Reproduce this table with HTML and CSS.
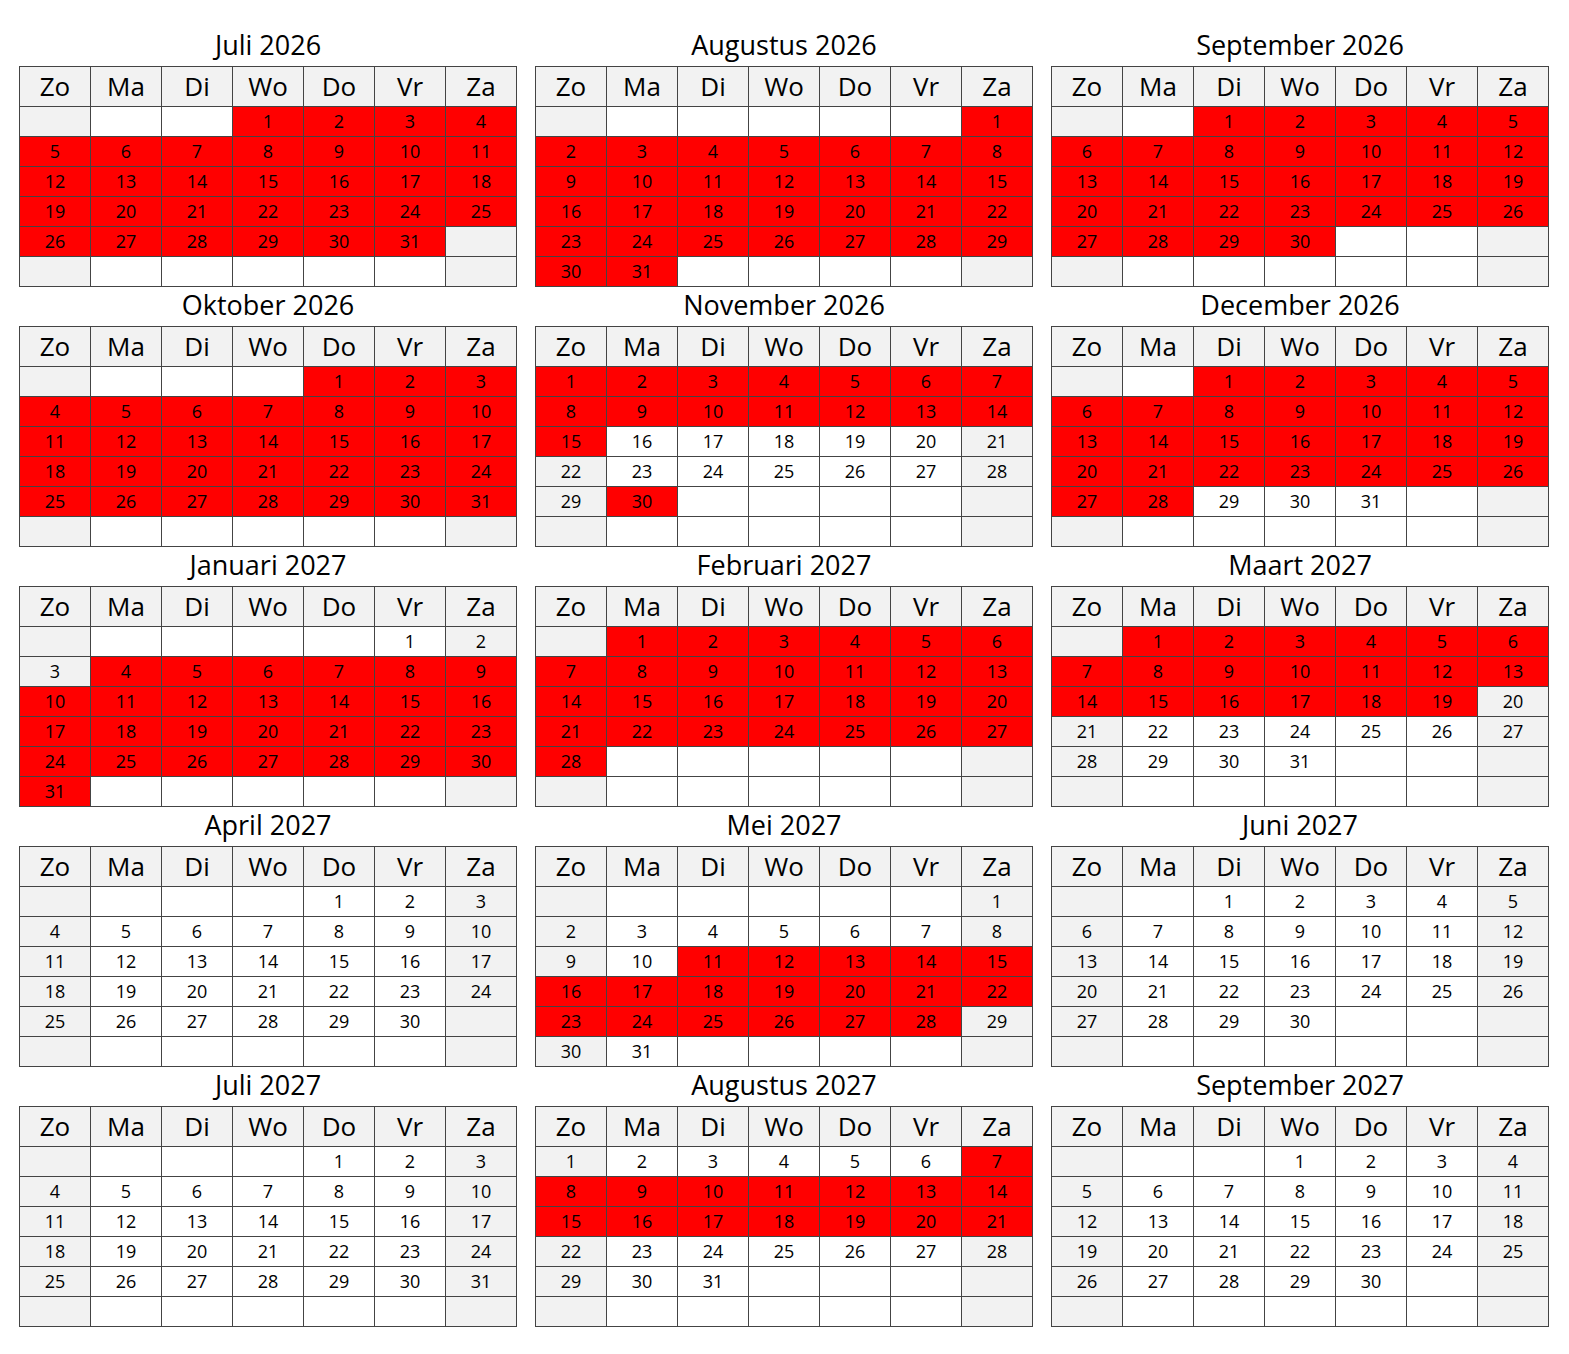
FILE: index.html
```html
<!DOCTYPE html>
<html lang="nl">
<head>
<meta charset="utf-8">
<title>Kalender</title>
<link rel="stylesheet" href="styles.css">
</head>
<body>
<div class="grid">

<section class="month">
<h2 class="title">Juli 2026</h2>
<table class="cal">
<thead><tr><th>Zo</th><th>Ma</th><th>Di</th><th>Wo</th><th>Do</th><th>Vr</th><th>Za</th></tr></thead>
<tbody>
<tr><td></td><td></td><td></td><td class="r">1</td><td class="r">2</td><td class="r">3</td><td class="r">4</td></tr>
<tr class="r"><td>5</td><td>6</td><td>7</td><td>8</td><td>9</td><td>10</td><td>11</td></tr>
<tr class="r"><td>12</td><td>13</td><td>14</td><td>15</td><td>16</td><td>17</td><td>18</td></tr>
<tr class="r"><td>19</td><td>20</td><td>21</td><td>22</td><td>23</td><td>24</td><td>25</td></tr>
<tr><td class="r">26</td><td class="r">27</td><td class="r">28</td><td class="r">29</td><td class="r">30</td><td class="r">31</td><td></td></tr>
<tr><td></td><td></td><td></td><td></td><td></td><td></td><td></td></tr>
</tbody>
</table>
</section>

<section class="month">
<h2 class="title">Augustus 2026</h2>
<table class="cal">
<thead><tr><th>Zo</th><th>Ma</th><th>Di</th><th>Wo</th><th>Do</th><th>Vr</th><th>Za</th></tr></thead>
<tbody>
<tr><td></td><td></td><td></td><td></td><td></td><td></td><td class="r">1</td></tr>
<tr class="r"><td>2</td><td>3</td><td>4</td><td>5</td><td>6</td><td>7</td><td>8</td></tr>
<tr class="r"><td>9</td><td>10</td><td>11</td><td>12</td><td>13</td><td>14</td><td>15</td></tr>
<tr class="r"><td>16</td><td>17</td><td>18</td><td>19</td><td>20</td><td>21</td><td>22</td></tr>
<tr class="r"><td>23</td><td>24</td><td>25</td><td>26</td><td>27</td><td>28</td><td>29</td></tr>
<tr><td class="r">30</td><td class="r">31</td><td></td><td></td><td></td><td></td><td></td></tr>
</tbody>
</table>
</section>

<section class="month">
<h2 class="title">September 2026</h2>
<table class="cal">
<thead><tr><th>Zo</th><th>Ma</th><th>Di</th><th>Wo</th><th>Do</th><th>Vr</th><th>Za</th></tr></thead>
<tbody>
<tr><td></td><td></td><td class="r">1</td><td class="r">2</td><td class="r">3</td><td class="r">4</td><td class="r">5</td></tr>
<tr class="r"><td>6</td><td>7</td><td>8</td><td>9</td><td>10</td><td>11</td><td>12</td></tr>
<tr class="r"><td>13</td><td>14</td><td>15</td><td>16</td><td>17</td><td>18</td><td>19</td></tr>
<tr class="r"><td>20</td><td>21</td><td>22</td><td>23</td><td>24</td><td>25</td><td>26</td></tr>
<tr><td class="r">27</td><td class="r">28</td><td class="r">29</td><td class="r">30</td><td></td><td></td><td></td></tr>
<tr><td></td><td></td><td></td><td></td><td></td><td></td><td></td></tr>
</tbody>
</table>
</section>

<section class="month">
<h2 class="title">Oktober 2026</h2>
<table class="cal">
<thead><tr><th>Zo</th><th>Ma</th><th>Di</th><th>Wo</th><th>Do</th><th>Vr</th><th>Za</th></tr></thead>
<tbody>
<tr><td></td><td></td><td></td><td></td><td class="r">1</td><td class="r">2</td><td class="r">3</td></tr>
<tr class="r"><td>4</td><td>5</td><td>6</td><td>7</td><td>8</td><td>9</td><td>10</td></tr>
<tr class="r"><td>11</td><td>12</td><td>13</td><td>14</td><td>15</td><td>16</td><td>17</td></tr>
<tr class="r"><td>18</td><td>19</td><td>20</td><td>21</td><td>22</td><td>23</td><td>24</td></tr>
<tr class="r"><td>25</td><td>26</td><td>27</td><td>28</td><td>29</td><td>30</td><td>31</td></tr>
<tr><td></td><td></td><td></td><td></td><td></td><td></td><td></td></tr>
</tbody>
</table>
</section>

<section class="month">
<h2 class="title">November 2026</h2>
<table class="cal">
<thead><tr><th>Zo</th><th>Ma</th><th>Di</th><th>Wo</th><th>Do</th><th>Vr</th><th>Za</th></tr></thead>
<tbody>
<tr class="r"><td>1</td><td>2</td><td>3</td><td>4</td><td>5</td><td>6</td><td>7</td></tr>
<tr class="r"><td>8</td><td>9</td><td>10</td><td>11</td><td>12</td><td>13</td><td>14</td></tr>
<tr><td class="r">15</td><td>16</td><td>17</td><td>18</td><td>19</td><td>20</td><td>21</td></tr>
<tr><td>22</td><td>23</td><td>24</td><td>25</td><td>26</td><td>27</td><td>28</td></tr>
<tr><td>29</td><td class="r">30</td><td></td><td></td><td></td><td></td><td></td></tr>
<tr><td></td><td></td><td></td><td></td><td></td><td></td><td></td></tr>
</tbody>
</table>
</section>

<section class="month">
<h2 class="title">December 2026</h2>
<table class="cal">
<thead><tr><th>Zo</th><th>Ma</th><th>Di</th><th>Wo</th><th>Do</th><th>Vr</th><th>Za</th></tr></thead>
<tbody>
<tr><td></td><td></td><td class="r">1</td><td class="r">2</td><td class="r">3</td><td class="r">4</td><td class="r">5</td></tr>
<tr class="r"><td>6</td><td>7</td><td>8</td><td>9</td><td>10</td><td>11</td><td>12</td></tr>
<tr class="r"><td>13</td><td>14</td><td>15</td><td>16</td><td>17</td><td>18</td><td>19</td></tr>
<tr class="r"><td>20</td><td>21</td><td>22</td><td>23</td><td>24</td><td>25</td><td>26</td></tr>
<tr><td class="r">27</td><td class="r">28</td><td>29</td><td>30</td><td>31</td><td></td><td></td></tr>
<tr><td></td><td></td><td></td><td></td><td></td><td></td><td></td></tr>
</tbody>
</table>
</section>

<section class="month">
<h2 class="title">Januari 2027</h2>
<table class="cal">
<thead><tr><th>Zo</th><th>Ma</th><th>Di</th><th>Wo</th><th>Do</th><th>Vr</th><th>Za</th></tr></thead>
<tbody>
<tr><td></td><td></td><td></td><td></td><td></td><td>1</td><td>2</td></tr>
<tr><td>3</td><td class="r">4</td><td class="r">5</td><td class="r">6</td><td class="r">7</td><td class="r">8</td><td class="r">9</td></tr>
<tr class="r"><td>10</td><td>11</td><td>12</td><td>13</td><td>14</td><td>15</td><td>16</td></tr>
<tr class="r"><td>17</td><td>18</td><td>19</td><td>20</td><td>21</td><td>22</td><td>23</td></tr>
<tr class="r"><td>24</td><td>25</td><td>26</td><td>27</td><td>28</td><td>29</td><td>30</td></tr>
<tr><td class="r">31</td><td></td><td></td><td></td><td></td><td></td><td></td></tr>
</tbody>
</table>
</section>

<section class="month">
<h2 class="title">Februari 2027</h2>
<table class="cal">
<thead><tr><th>Zo</th><th>Ma</th><th>Di</th><th>Wo</th><th>Do</th><th>Vr</th><th>Za</th></tr></thead>
<tbody>
<tr><td></td><td class="r">1</td><td class="r">2</td><td class="r">3</td><td class="r">4</td><td class="r">5</td><td class="r">6</td></tr>
<tr class="r"><td>7</td><td>8</td><td>9</td><td>10</td><td>11</td><td>12</td><td>13</td></tr>
<tr class="r"><td>14</td><td>15</td><td>16</td><td>17</td><td>18</td><td>19</td><td>20</td></tr>
<tr class="r"><td>21</td><td>22</td><td>23</td><td>24</td><td>25</td><td>26</td><td>27</td></tr>
<tr><td class="r">28</td><td></td><td></td><td></td><td></td><td></td><td></td></tr>
<tr><td></td><td></td><td></td><td></td><td></td><td></td><td></td></tr>
</tbody>
</table>
</section>

<section class="month">
<h2 class="title">Maart 2027</h2>
<table class="cal">
<thead><tr><th>Zo</th><th>Ma</th><th>Di</th><th>Wo</th><th>Do</th><th>Vr</th><th>Za</th></tr></thead>
<tbody>
<tr><td></td><td class="r">1</td><td class="r">2</td><td class="r">3</td><td class="r">4</td><td class="r">5</td><td class="r">6</td></tr>
<tr class="r"><td>7</td><td>8</td><td>9</td><td>10</td><td>11</td><td>12</td><td>13</td></tr>
<tr><td class="r">14</td><td class="r">15</td><td class="r">16</td><td class="r">17</td><td class="r">18</td><td class="r">19</td><td>20</td></tr>
<tr><td>21</td><td>22</td><td>23</td><td>24</td><td>25</td><td>26</td><td>27</td></tr>
<tr><td>28</td><td>29</td><td>30</td><td>31</td><td></td><td></td><td></td></tr>
<tr><td></td><td></td><td></td><td></td><td></td><td></td><td></td></tr>
</tbody>
</table>
</section>

<section class="month">
<h2 class="title">April 2027</h2>
<table class="cal">
<thead><tr><th>Zo</th><th>Ma</th><th>Di</th><th>Wo</th><th>Do</th><th>Vr</th><th>Za</th></tr></thead>
<tbody>
<tr><td></td><td></td><td></td><td></td><td>1</td><td>2</td><td>3</td></tr>
<tr><td>4</td><td>5</td><td>6</td><td>7</td><td>8</td><td>9</td><td>10</td></tr>
<tr><td>11</td><td>12</td><td>13</td><td>14</td><td>15</td><td>16</td><td>17</td></tr>
<tr><td>18</td><td>19</td><td>20</td><td>21</td><td>22</td><td>23</td><td>24</td></tr>
<tr><td>25</td><td>26</td><td>27</td><td>28</td><td>29</td><td>30</td><td></td></tr>
<tr><td></td><td></td><td></td><td></td><td></td><td></td><td></td></tr>
</tbody>
</table>
</section>

<section class="month">
<h2 class="title">Mei 2027</h2>
<table class="cal">
<thead><tr><th>Zo</th><th>Ma</th><th>Di</th><th>Wo</th><th>Do</th><th>Vr</th><th>Za</th></tr></thead>
<tbody>
<tr><td></td><td></td><td></td><td></td><td></td><td></td><td>1</td></tr>
<tr><td>2</td><td>3</td><td>4</td><td>5</td><td>6</td><td>7</td><td>8</td></tr>
<tr><td>9</td><td>10</td><td class="r">11</td><td class="r">12</td><td class="r">13</td><td class="r">14</td><td class="r">15</td></tr>
<tr class="r"><td>16</td><td>17</td><td>18</td><td>19</td><td>20</td><td>21</td><td>22</td></tr>
<tr><td class="r">23</td><td class="r">24</td><td class="r">25</td><td class="r">26</td><td class="r">27</td><td class="r">28</td><td>29</td></tr>
<tr><td>30</td><td>31</td><td></td><td></td><td></td><td></td><td></td></tr>
</tbody>
</table>
</section>

<section class="month">
<h2 class="title">Juni 2027</h2>
<table class="cal">
<thead><tr><th>Zo</th><th>Ma</th><th>Di</th><th>Wo</th><th>Do</th><th>Vr</th><th>Za</th></tr></thead>
<tbody>
<tr><td></td><td></td><td>1</td><td>2</td><td>3</td><td>4</td><td>5</td></tr>
<tr><td>6</td><td>7</td><td>8</td><td>9</td><td>10</td><td>11</td><td>12</td></tr>
<tr><td>13</td><td>14</td><td>15</td><td>16</td><td>17</td><td>18</td><td>19</td></tr>
<tr><td>20</td><td>21</td><td>22</td><td>23</td><td>24</td><td>25</td><td>26</td></tr>
<tr><td>27</td><td>28</td><td>29</td><td>30</td><td></td><td></td><td></td></tr>
<tr><td></td><td></td><td></td><td></td><td></td><td></td><td></td></tr>
</tbody>
</table>
</section>

<section class="month">
<h2 class="title">Juli 2027</h2>
<table class="cal">
<thead><tr><th>Zo</th><th>Ma</th><th>Di</th><th>Wo</th><th>Do</th><th>Vr</th><th>Za</th></tr></thead>
<tbody>
<tr><td></td><td></td><td></td><td></td><td>1</td><td>2</td><td>3</td></tr>
<tr><td>4</td><td>5</td><td>6</td><td>7</td><td>8</td><td>9</td><td>10</td></tr>
<tr><td>11</td><td>12</td><td>13</td><td>14</td><td>15</td><td>16</td><td>17</td></tr>
<tr><td>18</td><td>19</td><td>20</td><td>21</td><td>22</td><td>23</td><td>24</td></tr>
<tr><td>25</td><td>26</td><td>27</td><td>28</td><td>29</td><td>30</td><td>31</td></tr>
<tr><td></td><td></td><td></td><td></td><td></td><td></td><td></td></tr>
</tbody>
</table>
</section>

<section class="month">
<h2 class="title">Augustus 2027</h2>
<table class="cal">
<thead><tr><th>Zo</th><th>Ma</th><th>Di</th><th>Wo</th><th>Do</th><th>Vr</th><th>Za</th></tr></thead>
<tbody>
<tr><td>1</td><td>2</td><td>3</td><td>4</td><td>5</td><td>6</td><td class="r">7</td></tr>
<tr class="r"><td>8</td><td>9</td><td>10</td><td>11</td><td>12</td><td>13</td><td>14</td></tr>
<tr class="r"><td>15</td><td>16</td><td>17</td><td>18</td><td>19</td><td>20</td><td>21</td></tr>
<tr><td>22</td><td>23</td><td>24</td><td>25</td><td>26</td><td>27</td><td>28</td></tr>
<tr><td>29</td><td>30</td><td>31</td><td></td><td></td><td></td><td></td></tr>
<tr><td></td><td></td><td></td><td></td><td></td><td></td><td></td></tr>
</tbody>
</table>
</section>

<section class="month">
<h2 class="title">September 2027</h2>
<table class="cal">
<thead><tr><th>Zo</th><th>Ma</th><th>Di</th><th>Wo</th><th>Do</th><th>Vr</th><th>Za</th></tr></thead>
<tbody>
<tr><td></td><td></td><td></td><td>1</td><td>2</td><td>3</td><td>4</td></tr>
<tr><td>5</td><td>6</td><td>7</td><td>8</td><td>9</td><td>10</td><td>11</td></tr>
<tr><td>12</td><td>13</td><td>14</td><td>15</td><td>16</td><td>17</td><td>18</td></tr>
<tr><td>19</td><td>20</td><td>21</td><td>22</td><td>23</td><td>24</td><td>25</td></tr>
<tr><td>26</td><td>27</td><td>28</td><td>29</td><td>30</td><td></td><td></td></tr>
<tr><td></td><td></td><td></td><td></td><td></td><td></td><td></td></tr>
</tbody>
</table>
</section>

</div>
</body>
</html>
```

FILE: styles.css
```css
html, body {
  margin: 0;
  padding: 0;
  background: #ffffff;
}

body {
  font-family: "Open Sans", "Noto Sans", "DejaVu Sans", sans-serif;
  color: #000000;
}

.grid {
  display: grid;
  grid-template-columns: repeat(3, 1fr);
  column-gap: 18px;
  row-gap: 0;
  width: 1530px;
  margin-left: 19px;
  padding-top: 27px;
}

.month {
  display: flex;
  flex-direction: column;
}

.title {
  margin: 0 0 3px;
  font-size: 27px;
  font-weight: 400;
  line-height: 36px;
  text-align: center;
}

.cal {
  border-collapse: collapse;
  width: 100%;
  table-layout: fixed;
}

.cal th,
.cal td {
  border: 1px solid #444444;
  padding: 0 0 1px;
  text-align: center;
  vertical-align: middle;
}

.cal th {
  height: 38px;
  font-size: 26px;
  font-weight: 400;
  line-height: 36px;
  background: #f2f2f2;
}

.cal td {
  height: 28px;
  font-size: 18px;
  line-height: 24px;
  background: #ffffff;
}

.cal td:first-child,
.cal td:last-child {
  background: #f2f2f2;
}

.cal tr.r td,
.cal td.r {
  background: #ff0000;
}
```
